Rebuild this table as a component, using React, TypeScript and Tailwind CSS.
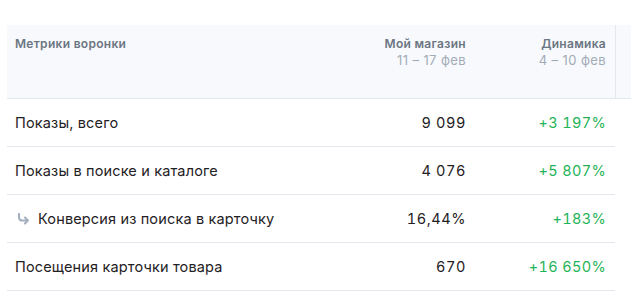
const rows = [
  { label: "Показы, всего", value: "9 099", delta: "+3 197%" },
  { label: "Показы в поиске и каталоге", value: "4 076", delta: "+5 807%" },
  { label: "Конверсия из поиска в карточку", value: "16,44%", delta: "+183%", sub: true },
  { label: "Посещения карточки товара", value: "670", delta: "+16 650%" },
];

const SubArrow = () => (
  <svg width="13" height="12" viewBox="0 0 13 12" fill="none" className="mr-[8px] ml-[2px]">
    <path d="M2 1v3.2C2 6.3 3.3 7.5 5.2 7.5h5" stroke="#a3afbf" strokeWidth="2.1" strokeLinecap="round" />
    <path d="M8 4.6 10.9 7.5 8 10.4" stroke="#a3afbf" strokeWidth="2.1" strokeLinecap="round" strokeLinejoin="round" />
  </svg>
);

export default function App() {
  return (
    <div className="w-[631px] h-[303px] bg-white pt-[25px] pl-[7px] flex font-['Inter',sans-serif] overflow-hidden">
      <div className="w-[608px] flex flex-col">
        <div className="h-[74px] bg-[#f8f9fc] border-b border-[#e3e8ee] grid grid-cols-[1fr_160px_149px] pt-[11px] text-[12px] leading-[16px]">
          <div className="pl-2 font-semibold text-[#6b7683] tracking-[0.3px]">Метрики воронки</div>
          <div className="flex flex-col items-end">
            <span className="font-semibold text-[#6b7683] tracking-[0.3px]">Мой магазин</span>
            <span className="text-[13px] text-[#a2acb8] tracking-[0.4px]">11 – 17 фев</span>
          </div>
          <div className="flex flex-col items-end pr-[9px]">
            <span className="font-semibold text-[#6b7683] tracking-[0.3px]">Динамика</span>
            <span className="text-[13px] text-[#a2acb8] tracking-[0.4px]">4 – 10 фев</span>
          </div>
        </div>
        {rows.map((r) => (
          <div
            key={r.label}
            className="h-[48px] border-b border-[#e3e8ee] grid grid-cols-[1fr_160px_149px] items-center text-[14.5px] leading-[20px] text-[#1f2124]"
          >
            <div className="pl-2 flex items-center tracking-[0.15px]">
              {r.sub && <SubArrow />}
              <span>{r.label}</span>
            </div>
            <div className="text-right tabular-nums tracking-[0.6px]">{r.value}</div>
            <div className="text-right pr-[9px] text-[#1fb457] tabular-nums tracking-[0.35px]">{r.delta}</div>
          </div>
        ))}
      </div>
      <div className="flex-1 h-[74px] bg-[#f8f9fc] border-l border-b border-[#e3e8ee]" />
    </div>
  );
}
